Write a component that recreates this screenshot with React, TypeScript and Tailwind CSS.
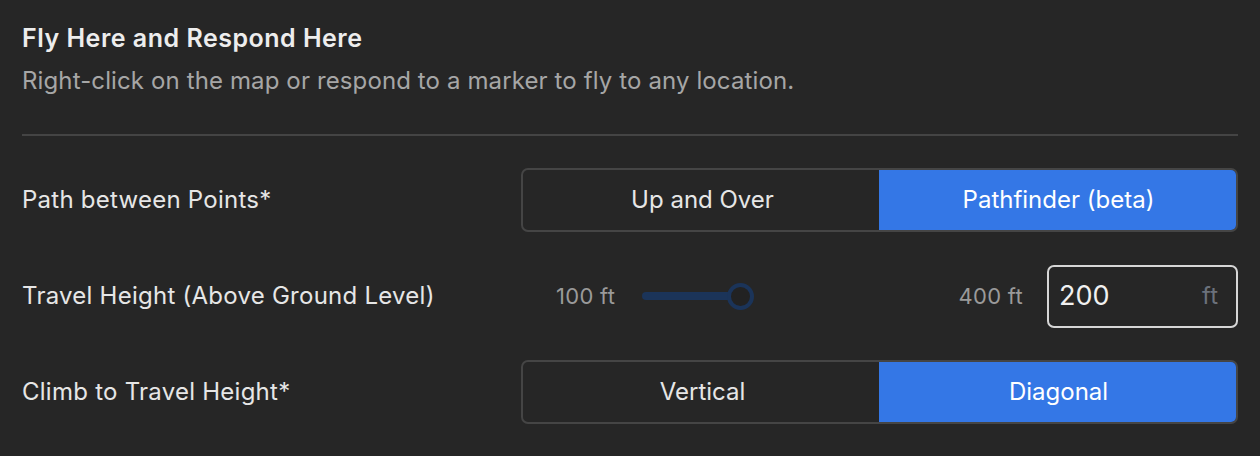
import React from "react";

const Segmented: React.FC<{ left: string; right: string }> = ({ left, right }) => {
  return (
    <div className="flex h-[64px] w-full rounded-[7px] border-2 border-[#454545] overflow-hidden">
      <button className="flex-1 flex items-center justify-center text-[24px] text-[#e6e6e6]">
        {left}
      </button>
      <button className="flex-1 -my-[2px] -mr-[2px] ml-[-3px] rounded-r-[7px] bg-[#3477e6] flex items-center justify-center text-[24px] text-white">
        {right}
      </button>
    </div>
  );
};

const App: React.FC = () => {
  return (
    <div
      className="w-[1260px] h-[456px] bg-[#262626] px-[22px] pt-[22px]"
      style={{ fontFamily: "Inter, 'Noto Sans', sans-serif" }}
    >
      <h1 className="text-[25px] leading-[32px] font-semibold text-[#ededed] tracking-[0.5px]">
        Fly Here and Respond Here
      </h1>
      <p className="mt-[11px] text-[24px] leading-[32px] text-[#a6a6a6] tracking-[0.12px]">
        Right-click on the map or respond to a marker to fly to any location.
      </p>
      <div className="mt-[37px] h-[2px] bg-[#444444]" />

      <div className="mt-[32px] grid grid-cols-[499px_1fr] gap-y-[32px] items-center">
        <div className="text-[24px] text-[#e6e6e6] tracking-[0.25px]">Path between Points*</div>
        <Segmented left="Up and Over" right="Pathfinder (beta)" />

        <div className="text-[24px] text-[#e6e6e6] tracking-[0.25px]">Travel Height (Above Ground Level)</div>
        <div className="flex items-center h-[64px]">
          <span className="ml-[35px] text-[22px] text-[#9a9a9a] tracking-[0.3px]">100 ft</span>
          <div className="ml-[27px] w-[300px] relative h-[27px] flex items-center">
            <div className="h-[8px] w-[98px] rounded-full bg-[#1b3459]" />
            <div className="absolute left-[85px] top-0 w-[27px] h-[27px] rounded-full border-[4px] border-[#1b3459] bg-[#222222]" />
          </div>
          <span className="ml-auto mr-[24px] text-[22px] text-[#9a9a9a] tracking-[0.3px]">400 ft</span>
          <div className="w-[191px] h-[63px] rounded-[7px] border-2 border-[#d6d6d6] flex items-center px-[10px]">
            <span className="text-[27px] text-[#f0f0f0]">200</span>
            <span className="ml-auto mr-[8px] text-[24px] text-[#6b717b]">ft</span>
          </div>
        </div>

        <div className="text-[24px] text-[#e6e6e6] tracking-[0.25px]">Climb to Travel Height*</div>
        <Segmented left="Vertical" right="Diagonal" />
      </div>
    </div>
  );
};

export default App;
